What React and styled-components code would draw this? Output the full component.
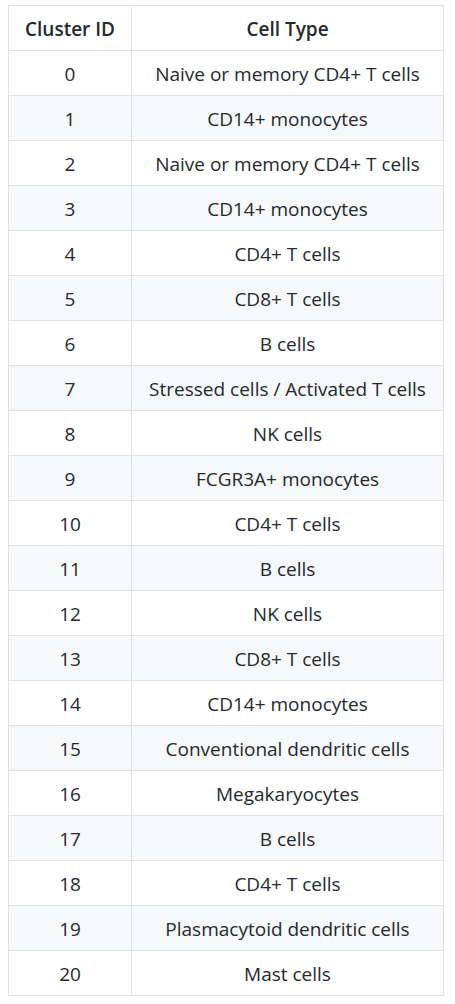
import React from "react";
import styled, { createGlobalStyle } from "styled-components";

const Global = createGlobalStyle`
  html, body { margin: 0; padding: 0; background: #ffffff; }
  body {
    padding: 5px 0 0 8px;
    font-family: "Open Sans", "Noto Sans", "Liberation Sans", sans-serif;
    color: #24292e;
  }
`;

const Table = styled.table`
  border-collapse: collapse;
  border-spacing: 0;
  table-layout: fixed;
  width: 435px;
  font-size: 19px;
`;

const Col = styled.col`
  width: ${(p) => p.$w};
`;

const HeadCell = styled.th`
  border: 1px solid #dfe2e5;
  padding: 11px 6px 9px;
  line-height: 24px;
  font-weight: 600;
  text-align: center;
`;

const Row = styled.tr`
  background: ${(p) => (p.$striped ? "#f6f8fa" : "#ffffff")};
`;

const Cell = styled.td`
  border: 1px solid #dfe2e5;
  padding: 11px 6px 9px;
  line-height: 24px;
  text-align: center;
  white-space: nowrap;
`;

const rows = [
  "Naive or memory CD4+ T cells",
  "CD14+ monocytes",
  "Naive or memory CD4+ T cells",
  "CD14+ monocytes",
  "CD4+ T cells",
  "CD8+ T cells",
  "B cells",
  "Stressed cells / Activated T cells",
  "NK cells",
  "FCGR3A+ monocytes",
  "CD4+ T cells",
  "B cells",
  "NK cells",
  "CD8+ T cells",
  "CD14+ monocytes",
  "Conventional dendritic cells",
  "Megakaryocytes",
  "B cells",
  "CD4+ T cells",
  "Plasmacytoid dendritic cells",
  "Mast cells",
];

export default function App() {
  return (
    <>
      <Global />
      <Table>
        <colgroup>
          <Col $w="123px" />
          <Col $w="312px" />
        </colgroup>
        <thead>
          <Row>
            <HeadCell>Cluster ID</HeadCell>
            <HeadCell>Cell Type</HeadCell>
          </Row>
        </thead>
        <tbody>
          {rows.map((t, i) => (
            <Row key={i} $striped={i % 2 === 1}>
              <Cell>{i}</Cell>
              <Cell>{t}</Cell>
            </Row>
          ))}
        </tbody>
      </Table>
    </>
  );
}
